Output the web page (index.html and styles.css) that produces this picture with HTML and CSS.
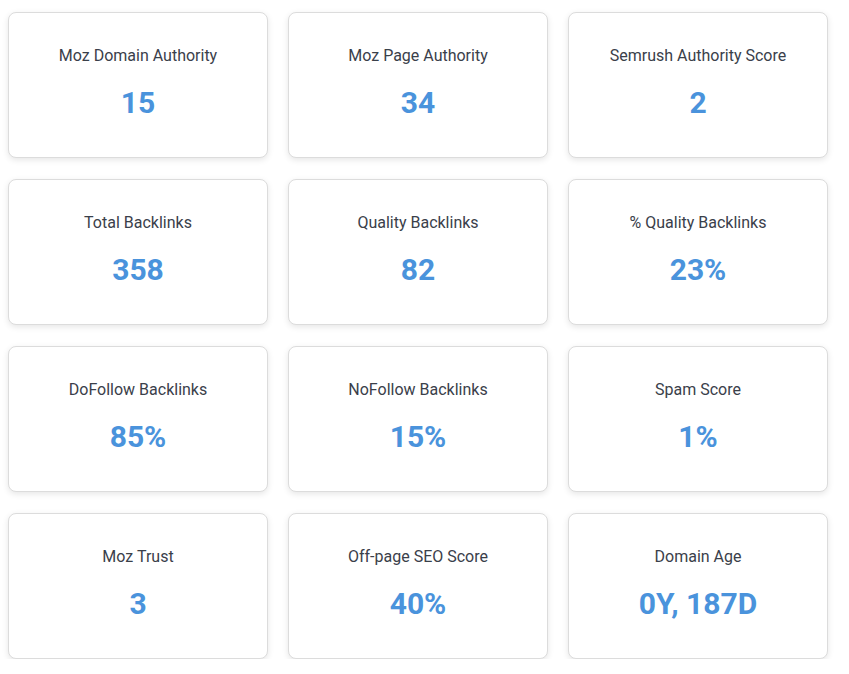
FILE: index.html
```html
<!DOCTYPE html>
<html>
<head>
<meta charset="utf-8">
<link rel="stylesheet" href="styles.css">
</head>
<body>
<div class="grid">
  <div class="card"><div class="label">Moz Domain Authority</div><div class="value">15</div></div>
  <div class="card"><div class="label">Moz Page Authority</div><div class="value">34</div></div>
  <div class="card"><div class="label">Semrush Authority Score</div><div class="value">2</div></div>
  <div class="card"><div class="label">Total Backlinks</div><div class="value">358</div></div>
  <div class="card"><div class="label">Quality Backlinks</div><div class="value">82</div></div>
  <div class="card"><div class="label">% Quality Backlinks</div><div class="value">23%</div></div>
  <div class="card"><div class="label">DoFollow Backlinks</div><div class="value">85%</div></div>
  <div class="card"><div class="label">NoFollow Backlinks</div><div class="value">15%</div></div>
  <div class="card"><div class="label">Spam Score</div><div class="value">1%</div></div>
  <div class="card"><div class="label">Moz Trust</div><div class="value">3</div></div>
  <div class="card"><div class="label">Off-page SEO Score</div><div class="value">40%</div></div>
  <div class="card"><div class="label">Domain Age</div><div class="value">0Y, 187D</div></div>
</div>
</body>
</html>
```
FILE: styles.css
```css
html, body {
  margin: 0;
  padding: 0;
  background: #ffffff;
  font-family: Roboto, "Liberation Sans", sans-serif;
}
.grid {
  display: grid;
  grid-template-columns: repeat(3, 260px);
  column-gap: 20px;
  row-gap: 21px;
  padding: 12px 0 0 8px;
}
.card {
  box-sizing: border-box;
  height: 146px;
  border: 1px solid #dcdcdc;
  border-radius: 8px;
  background: #fff;
  box-shadow: 0 2px 6px rgba(0, 0, 0, 0.10);
  display: flex;
  flex-direction: column;
  align-items: center;
  padding-top: 31px;
  text-align: center;
}
.label {
  font-size: 16px;
  line-height: 24px;
  color: #3a404a;
}
.value {
  margin-top: 17px;
  font-size: 30px;
  line-height: 36px;
  font-weight: 700;
  color: #4a93dc;
}
```
